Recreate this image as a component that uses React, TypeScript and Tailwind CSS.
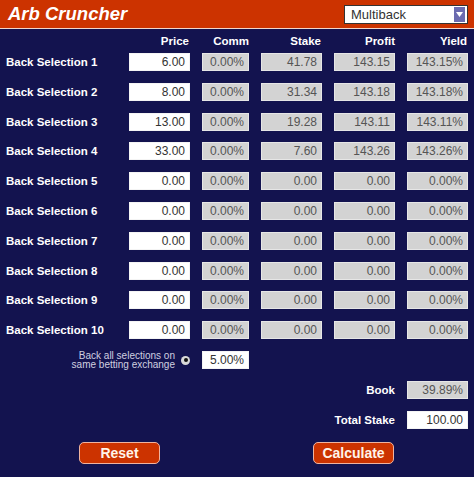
import React from "react";

const rows = [
  ["6.00", "0.00%", "41.78", "143.15", "143.15%"],
  ["8.00", "0.00%", "31.34", "143.18", "143.18%"],
  ["13.00", "0.00%", "19.28", "143.11", "143.11%"],
  ["33.00", "0.00%", "7.60", "143.26", "143.26%"],
  ["0.00", "0.00%", "0.00", "0.00", "0.00%"],
  ["0.00", "0.00%", "0.00", "0.00", "0.00%"],
  ["0.00", "0.00%", "0.00", "0.00", "0.00%"],
  ["0.00", "0.00%", "0.00", "0.00", "0.00%"],
  ["0.00", "0.00%", "0.00", "0.00", "0.00%"],
  ["0.00", "0.00%", "0.00", "0.00", "0.00%"],
];

function WhiteBox({ v }: { v: string }) {
  return (
    <div className="h-[18px] bg-white text-[#333] text-[12px] leading-[16px] text-right pr-[4px] border border-[#f4f4f4]">
      {v}
    </div>
  );
}

function GreyBox({ v }: { v: string }) {
  return (
    <div className="h-[18px] bg-[#d3d3d3] text-[#555] text-[12px] leading-[16px] text-right pr-[4px] border border-[#e6e6e6]">
      {v}
    </div>
  );
}

export default function App() {
  return (
    <div
      className="w-[474px] h-[477px] bg-[#13134f] overflow-hidden"
      style={{ fontFamily: '"Liberation Sans", Arial, sans-serif' }}
    >
      <div className="h-[28px] bg-[#cc3300] flex items-center justify-between pl-[8px] pr-[6px]">
        <div className="text-white font-bold italic text-[18.5px] leading-none">Arb Cruncher</div>
        <div className="w-[124px] h-[19px] bg-white border border-[#333] flex items-center justify-between pl-[6px] pr-[2px]">
          <span className="text-[#333] text-[13px] leading-none">Multiback</span>
          <div className="w-[11px] h-[15px] bg-[#6b6bb0] flex items-center justify-center">
            <svg width="7" height="5" viewBox="0 0 7 5">
              <polygon points="0,0 7,0 3.5,5" fill="white" />
            </svg>
          </div>
        </div>
      </div>
      <div className="h-[1px] bg-[#f2d6cc]" />

      <div className="pl-[6px] pt-[5px]">
        <div className="grid grid-cols-[111px_61px_47px_61px_61px_61px] gap-x-3 h-[14px] text-white font-bold text-[11.5px] leading-[14px] mb-[5px]">
          <div />
          <div className="text-right pr-[1px]">Price</div>
          <div className="text-right">Comm</div>
          <div className="text-right pr-[1px]">Stake</div>
          <div className="text-right">Profit</div>
          <div className="text-right pr-[1px]">Yield</div>
        </div>
        <div className="grid grid-cols-[111px_61px_47px_61px_61px_61px] gap-x-3 gap-y-[11.8px]">
          {rows.map((r, i) => (
            <React.Fragment key={i}>
              <div className="text-white font-bold text-[11.5px] leading-[18px] whitespace-nowrap">
                Back Selection {i + 1}
              </div>
              <WhiteBox v={r[0]} />
              <GreyBox v={r[1]} />
              <GreyBox v={r[2]} />
              <GreyBox v={r[3]} />
              <GreyBox v={r[4]} />
            </React.Fragment>
          ))}
        </div>

        <div className="grid grid-cols-[111px_61px_47px_61px_61px_61px] gap-x-3 h-[18px] mt-[12px]">
          <div className="col-span-2 h-[18px] flex items-center justify-end gap-[6px]">
            <div className="text-[#d0d0e0] text-[10px] leading-[9.5px] text-right whitespace-nowrap">
              Back all selections on
              <br />
              same betting exchange
            </div>
            <div className="w-[9px] h-[9px] rounded-full bg-[#d8d8d8] flex items-center justify-center">
              <div className="w-[4px] h-[4px] rounded-full bg-[#111]" />
            </div>
          </div>
          <WhiteBox v="5.00%" />
        </div>

        <div className="grid grid-cols-[111px_61px_47px_61px_61px_61px] gap-x-3 mt-[12px]">
          <div className="col-span-5 text-right text-white font-bold text-[11.5px] leading-[18px]">Book</div>
          <GreyBox v="39.89%" />
        </div>
        <div className="grid grid-cols-[111px_61px_47px_61px_61px_61px] gap-x-3 mt-[12px]">
          <div className="col-span-5 text-right text-white font-bold text-[11.5px] leading-[18px]">Total Stake</div>
          <WhiteBox v="100.00" />
        </div>
      </div>

      <div className="flex mt-[13px] pl-[79px]">
        <button className="w-[81px] h-[22px] bg-[#cc3300] border border-[#efb4a0] rounded-[5px] text-[#fff4ea] font-bold text-[14px] leading-none">
          Reset
        </button>
        <button className="w-[81px] h-[22px] ml-[153px] bg-[#cc3300] border border-[#efb4a0] rounded-[5px] text-[#fff4ea] font-bold text-[14px] leading-none">
          Calculate
        </button>
      </div>
    </div>
  );
}
